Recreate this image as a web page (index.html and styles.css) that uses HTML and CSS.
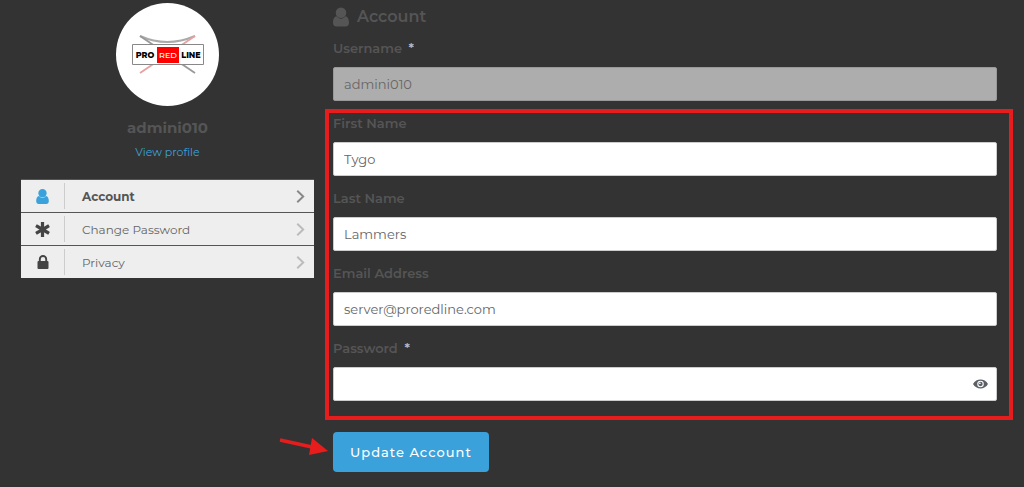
FILE: index.html
```html
<!DOCTYPE html>
<html lang="en">
<head>
<meta charset="utf-8">
<meta name="viewport" content="width=device-width, initial-scale=1">
<title>Account</title>
<link rel="stylesheet" href="styles.css">
</head>
<body>
<svg class="defs" aria-hidden="true">
  <symbol id="user" viewBox="0 0 16 19"><path d="M8 0a5.300 5.300 0 1 1 0 10.600A5.300 5.300 0 0 1 8 0ZM3.500 8.800C1 9.200 0 12.200 0 15.300 0 17.600 1.300 19 3.300 19h9.400c2 0 3.300-1.400 3.300-3.700 0-3.100-1-6.100-3.500-6.500-2.600 3.200-6.400 3.200-9 0Z"/></symbol>
  <symbol id="chevron" viewBox="0 0 8 12"><path d="M1 0.700 6.500 6 1 11.300" fill="none" stroke="currentColor" stroke-width="1.800"/></symbol>
</svg>
<main class="page">
  <aside class="sidebar">
    <svg class="avatar" viewBox="0 0 103 103" role="img" aria-label="Pro Red Line">
      <circle cx="51.500" cy="51.500" r="51.500" fill="#fff"/>
      <path d="M24 33Q51 45 79 33" fill="none" stroke="#aaa" stroke-width="2"/>
      <path d="M24 33 79 70" stroke="#999" stroke-width="1.800"/>
      <path d="M24 70 79 33" stroke="#e8a0a0" stroke-width="1.800"/>
      <path d="M16.500 41.500h71v20h-71z" fill="#fff" stroke="#888"/>
      <path d="M41 44h22v16H41z" fill="#f00"/>
      <g class="logo-text" text-anchor="middle"><text x="29" y="54.500">PRO</text><text class="logo-red" x="52" y="54.500">RED</text><text x="75" y="54.500">LINE</text></g>
    </svg>
    <h2 class="name">admini010</h2>
    <a class="view-link" href="#">View profile</a>
    <nav class="menu">
      <a class="menu-item active" href="#"><span class="menu-icon"><svg class="icon-user"><use href="#user"/></svg></span><span class="menu-label">Account</span><svg class="chevron"><use href="#chevron"/></svg></a>
      <a class="menu-item" href="#"><span class="menu-icon"><svg class="icon-star" viewBox="0 0 14 14"><path d="M7 1.500v11M2.200 4.200l9.600 5.600M11.800 4.200 2.200 9.800" stroke="currentColor" stroke-width="3" stroke-linecap="square"/></svg></span><span class="menu-label">Change Password</span><svg class="chevron"><use href="#chevron"/></svg></a>
      <a class="menu-item" href="#"><span class="menu-icon"><svg class="icon-lock" viewBox="0 0 12 14"><path d="M2.800 7V4.200a3.200 3.200 0 0 1 6.400 0V7" fill="none" stroke="currentColor" stroke-width="1.900"/><rect x="0.500" y="6" width="11" height="8" rx="1" fill="currentColor"/></svg></span><span class="menu-label">Privacy</span><svg class="chevron"><use href="#chevron"/></svg></a>
    </nav>
  </aside>
  <form class="form">
    <h1 class="title"><svg class="title-icon"><use href="#user"/></svg>Account</h1>
    <div class="field"><label for="username">Username <span class="required">*</span></label><input id="username" type="text" value="admini010" disabled></div>
    <div class="highlight">
      <div class="field"><label for="first">First Name</label><input id="first" type="text" value="Tygo"></div>
      <div class="field"><label for="last">Last Name</label><input id="last" type="text" value="Lammers"></div>
      <div class="field"><label for="email">Email Address</label><input id="email" type="email" value="server@proredline.com"></div>
      <div class="field"><label for="password">Password <span class="required">*</span></label>
        <div class="password"><input id="password" type="password"><button class="eye" type="button" aria-label="Show password"><svg viewBox="0 0 16 10"><path d="M0 5C3.500-1.300 12.500-1.300 16 5 12.500 11.300 3.500 11.300 0 5Z" fill="#5b5f66"/><circle cx="8" cy="5" r="3.500" fill="#fff"/><circle cx="8" cy="5" r="2.300" fill="#5b5f66"/><circle cx="7.300" cy="4.200" r="0.900" fill="#fff"/></svg></button></div></div>
    </div>
    <div class="actions"><button class="submit" type="submit">Update Account</button>
      <svg class="arrow" viewBox="0 0 50 20" aria-hidden="true"><path d="M1 4 33 11" stroke="#e71d1d" stroke-width="3.400"/><path d="M33 2 49 15 30 19Z" fill="#e71d1d"/></svg></div>
  </form>
</main>
</body>
</html>
```
FILE: styles.css
```css
* { box-sizing: border-box; }
body { margin: 0; background: #333; color: #555; font-family: Montserrat, Inter, sans-serif; font-size: 13px; }
.defs { position: absolute; width: 0; height: 0; }
.page { display: grid; grid-template-columns: minmax(0, 293fr) minmax(0, 664fr); gap: 19px; padding: 3px 27px 13px 21px; border-bottom: 2px solid #382f34; }
.sidebar { display: flex; flex-direction: column; align-items: center; }
.avatar { width: 103px; height: 103px; }
.logo-text { font-size: 8px; font-weight: 800; fill: #000; }
.logo-red { font-weight: 500; fill: #fff; }
.name { margin: 10px 0 0; font-size: 15px; line-height: 24px; font-weight: 700; }
.view-link { margin-top: 4px; font-size: 11px; line-height: 16px; color: #3ba1da; text-decoration: none; }
.menu { align-self: stretch; display: flex; flex-direction: column; margin-top: 19px; }
.menu-item { display: flex; align-items: center; min-height: 33px; padding-right: 9px; border-top: 1px solid #555; background: #eee; color: #666; font-size: 12px; text-decoration: none; }
.menu-icon { display: flex; align-items: center; justify-content: center; width: 44px; height: 26px; border-right: 1px solid #ccc; color: #444; }
.menu-label { flex: 1; padding-left: 17px; }
.active { color: #555; font-weight: 700; }
.active .menu-icon { color: #3ba1da; }
.icon-user { width: 13px; height: 15px; fill: currentColor; }
.icon-star { width: 15px; height: 15px; }
.icon-lock { width: 12px; height: 14px; }
.chevron { width: 9px; height: 13px; color: #bbb; }
.active .chevron { color: #888; }
.title { display: flex; align-items: center; gap: 8px; margin: 3px 0 10px; font-size: 16px; line-height: 22px; font-weight: 600; }
.title-icon { width: 16px; height: 20px; fill: currentColor; }
.field { display: flex; flex-direction: column; gap: 9px; }
.field label { font-size: 13px; line-height: 20px; font-weight: 600; }
.required { margin-left: 3px; color: #bbb; }
.field input { width: 100%; height: 34px; padding: 0 10px; border: 1px solid #ccc; border-radius: 2px; background: #fff; color: #666; font: inherit; font-size: 13px; }
.field input:disabled { border-color: #999; background: #adadad; color: #666; }
.highlight { position: relative; display: flex; flex-direction: column; gap: 12px; margin-top: 12px; }
.highlight::before { content: ""; position: absolute; inset: -4px -16px -19px -8px; border: 4px solid #e71d1d; pointer-events: none; }
.password { position: relative; }
.eye { position: absolute; top: 0; right: 2px; width: 30px; height: 34px; display: grid; place-items: center; padding: 0; border: 0; background: none; }
.eye svg { width: 15px; height: 10px; }
.actions { position: relative; margin-top: 31px; }
.submit { height: 40px; padding: 0 17px; border: 0; border-radius: 4px; background: #3ba1da; color: #fff; font: inherit; font-size: 13px; font-weight: 500; letter-spacing: 1px; }
.arrow { position: absolute; left: -54px; top: 4px; width: 50px; height: 20px; }
```
